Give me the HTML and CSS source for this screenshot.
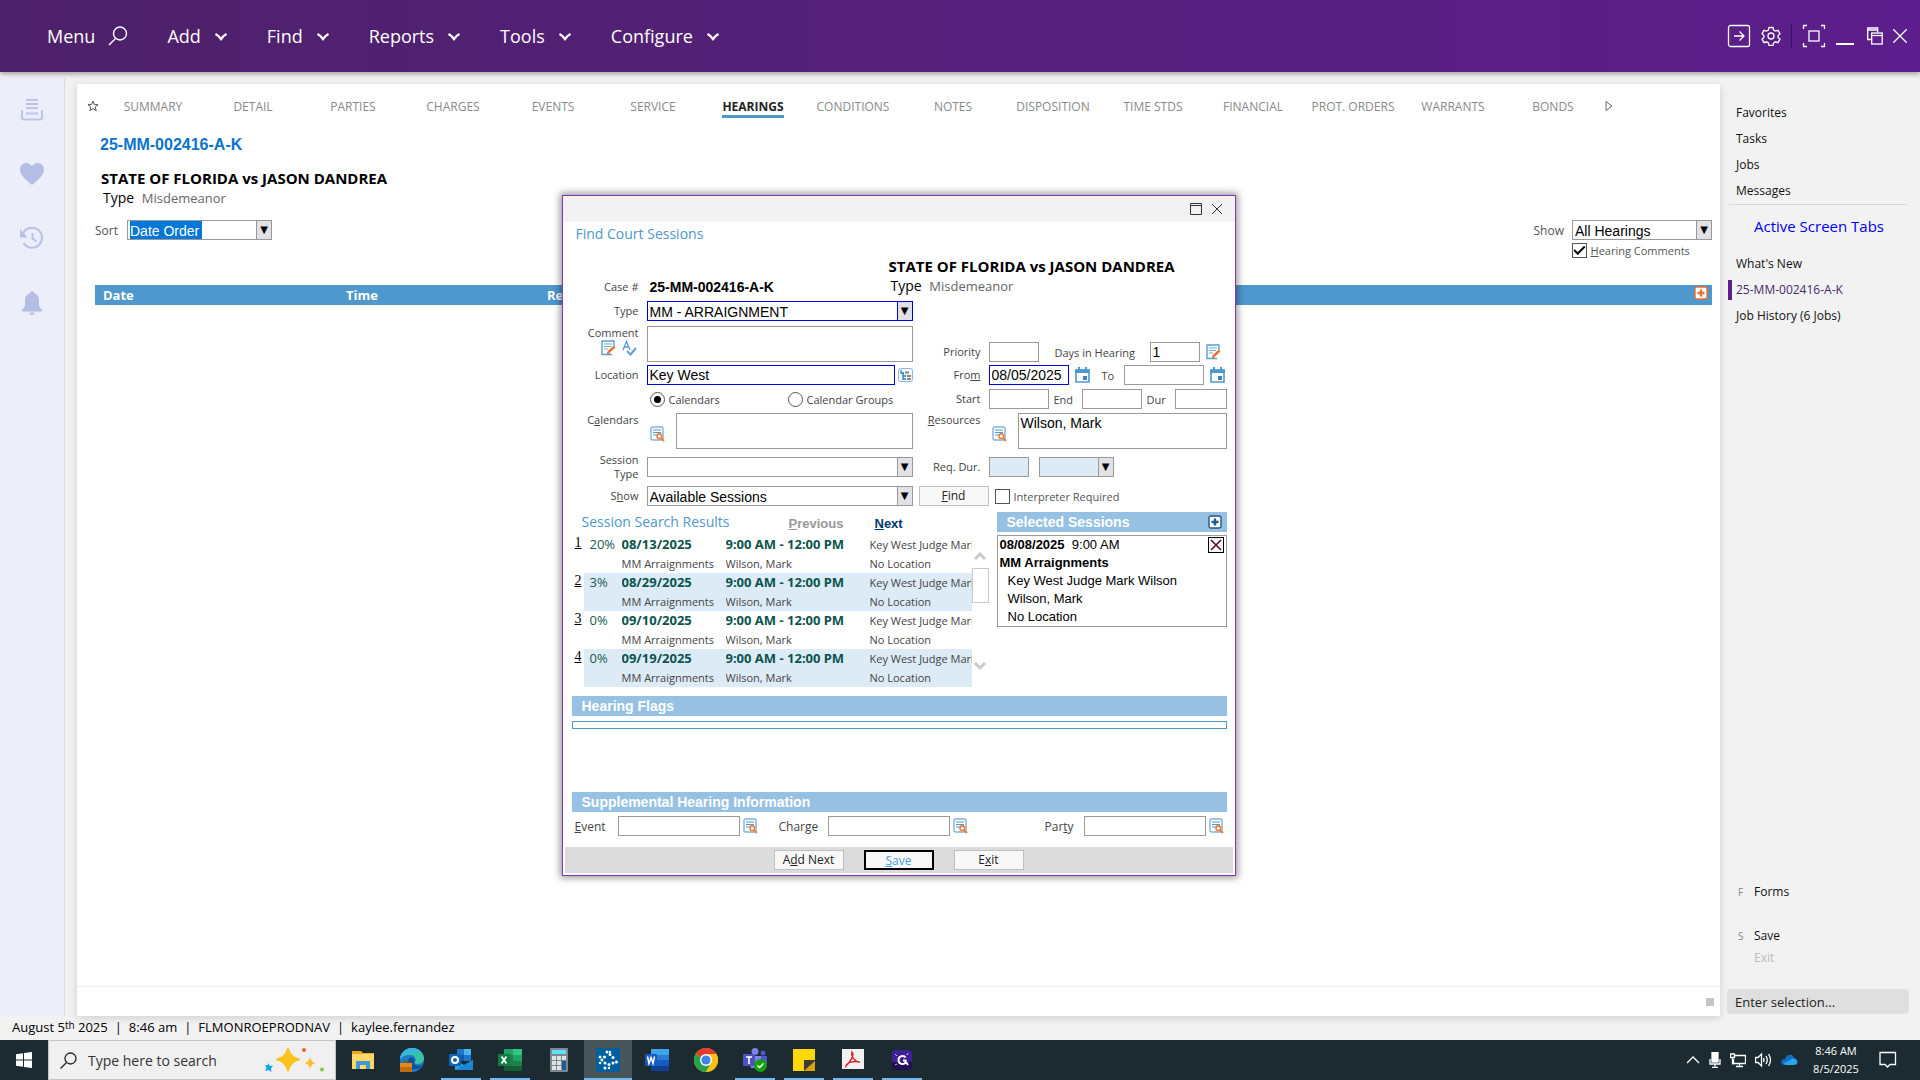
FILE: index.html
```html
<!DOCTYPE html>
<html lang="en">
<head>
  <meta charset="UTF-8">
  <title>25-MM-002416-A-K - Hearings</title>
  <meta name="viewport" content="width=device-width, initial-scale=1.0">
  <link rel="stylesheet" href="styles.css">
</head>
<body>
  <!-- shared icons -->
  <svg class="sprite" aria-hidden="true">
    <symbol id="chevron" viewBox="0 0 14 14"><path d="M1.500 5q3 1.500 5.500 5 2.500-3.500 5.500-5" fill="none" stroke="#fff" stroke-width="2.4"/></symbol>
    <symbol id="lookup" viewBox="0 0 15 16">
      <rect x="1" y="1" width="12" height="13" rx="1.5" fill="#fff" stroke="#7fb2dc" stroke-width="1.4"/>
      <path d="M3 4h8M3 6.5h8M3 9h5" stroke="#4e98ce" stroke-width="1.2"/>
      <circle cx="9.3" cy="10.2" r="2.3" fill="#fff" stroke="#ee7f3e" stroke-width="1.6"/>
      <path d="M11 12l3 3" stroke="#ee7f3e" stroke-width="2"/>
    </symbol>
    <symbol id="note" viewBox="0 0 15 16">
      <path d="M13 6V1H1v13.500h10" fill="#fff" stroke="#5a9fd2" stroke-width="1.4"/>
      <path d="M3 4h8M3 6.500h7M3 9h4" stroke="#6aa9d8" stroke-width="1.2"/>
      <path d="M7 14l.6-2 6-5.500" fill="none" stroke="#e8722e" stroke-width="2.400"/>
    </symbol>
    <symbol id="calendar" viewBox="0 0 15 16">
      <path d="M1 3h13v12H1z" fill="#fff" stroke="#4e98ce" stroke-width="1.600"/>
      <path d="M0 2.500h15V6H0zM3 0h2v3H3zM10 0h2v3h-2z" fill="#4e98ce"/>
      <rect x="8" y="9" width="4" height="4" fill="#3a86c0"/>
    </symbol>
    <symbol id="plus" viewBox="0 0 14 14">
      <rect x="1" y="1" width="12" height="12" rx="2" fill="#fff" stroke="currentColor" stroke-width="1.4"/>
      <path d="M7 3.500v7M3.500 7h7" stroke="currentColor" stroke-width="2.4"/>
    </symbol>
  </svg>

  <div class="app">
    <header class="topbar">
      <nav class="menu">
        <button class="menu-item menu-search">Menu
          <svg width="20" height="20" viewBox="0 0 20 20"><circle cx="12" cy="7.500" r="6.500" fill="none" stroke="#fff" stroke-width="1.400"/><path d="M7.500 12.500L1 19" stroke="#fff" stroke-width="1.400"/></svg>
        </button>
        <button class="menu-item">Add <svg class="chev"><use href="#chevron"/></svg></button>
        <button class="menu-item">Find <svg class="chev"><use href="#chevron"/></svg></button>
        <button class="menu-item">Reports <svg class="chev"><use href="#chevron"/></svg></button>
        <button class="menu-item">Tools <svg class="chev"><use href="#chevron"/></svg></button>
        <button class="menu-item">Configure <svg class="chev"><use href="#chevron"/></svg></button>
      </nav>
      <div class="window-tools">
        <button aria-label="Log out"><svg width="24" height="24" viewBox="0 0 24 24"><rect x="1.500" y="1.500" width="21" height="21" rx="2" /><path d="M7 12h10M12.500 7.500L17 12l-4.500 4.500"/></svg></button>
        <button aria-label="Settings"><svg width="20" height="20" viewBox="0 0 20 20"><circle cx="10" cy="10" r="3"/><path d="M8 1.500h4l.6 2.500 1.900 1.100 2.500-.8 2 3.400-1.900 1.800v1.900l1.900 1.800-2 3.400-2.500-.8-1.900 1.100-.6 2.500H8l-.6-2.500-1.900-1.100-2.500.8-2-3.400 1.900-1.800V9.500L1 7.700l2-3.400 2.500.8L7.400 4z"/></svg></button>
        <span class="tool-sep"></span>
        <button aria-label="Focus"><svg width="24" height="24" viewBox="0 0 24 24"><rect x="7" y="7" width="10" height="10"/><path d="M1.500 5V1.500H5M19 1.500h3.500V5M22.500 19v3.500H19M5 22.500H1.500V19"/></svg></button>
        <button aria-label="Minimize"><svg width="18" height="24" viewBox="0 0 18 24"><path d="M0 20h18" stroke-width="2"/></svg></button>
        <button class="restore" aria-label="Restore"><svg width="16" height="18" viewBox="0 0 16 18"><path d="M4.500 12.500H.7V1h10v4.500M.7 3h10"/><rect x="4.700" y="6" width="10.500" height="11"/><path d="M4.700 8.500h10.500"/></svg></button>
        <button aria-label="Close"><svg width="14" height="14" viewBox="0 0 14 14"><path d="M0 0l14 14M14 0L0 14"/></svg></button>
      </div>
    </header>

    <div class="workspace">
      <aside class="rail">
        <button aria-label="Documents"><svg width="24" height="22" viewBox="0 0 24 22"><path d="M6 1h12M6 5h12M6 9h12M6 14.500h12" stroke="#bdc5e6" stroke-width="2"/><path d="M2 11v7.500q0 2 2 2h16q2 0 2-2V11" fill="none" stroke="#bdc5e6" stroke-width="2"/></svg></button>
        <button aria-label="Favorites"><svg width="24" height="22" viewBox="0 0 24 22"><path d="M12 22C5 16 0 12 0 6.500 0 3 2.700 0 6.200 0 8.700 0 11 1.500 12 3.500 13 1.500 15.300 0 17.800 0 21.300 0 24 3 24 6.500 24 12 19 16 12 22z" fill="#b4bde4"/></svg></button>
        <button aria-label="History"><svg width="24" height="22" viewBox="0 0 24 22"><path d="M3 6.500A10 10 0 1 1 3.500 16" fill="none" stroke="#b9c1e5" stroke-width="2"/><path d="M0 2v8.500h7.500z" fill="#b9c1e5"/><path d="M12.500 6v5.500l4 3" fill="none" stroke="#b9c1e5" stroke-width="2"/></svg></button>
        <button aria-label="Alerts"><svg width="20" height="24" viewBox="0 0 20 24"><path d="M10 0c1.200 0 2 .9 2 2.200 3.400.9 5 3.600 5 7.300v6L20 19v1.500H0V19l3-3.500v-6c0-3.700 1.600-6.400 5-7.300C8 .9 8.800 0 10 0zM7.500 21.500h5C12.500 23 11.500 24 10 24s-2.500-1-2.500-2.500z" fill="#b4bde4"/></svg></button>
      </aside>

      <main class="panel">
        <nav class="tabs">
          <svg class="star" width="12" height="12" viewBox="0 0 12 12"><path d="M6 1l1.400 3.500 3.600.2-2.800 2.300 1 3.700L6 8.600l-3.200 2.100 1-3.700L1 4.700l3.600-.2z" fill="none" stroke="#555"/></svg>
          <a href="#">SUMMARY</a>
          <a href="#">DETAIL</a>
          <a href="#">PARTIES</a>
          <a href="#">CHARGES</a>
          <a href="#">EVENTS</a>
          <a href="#">SERVICE</a>
          <a href="#" class="active"><span>HEARINGS</span></a>
          <a href="#">CONDITIONS</a>
          <a href="#">NOTES</a>
          <a href="#">DISPOSITION</a>
          <a href="#">TIME STDS</a>
          <a href="#">FINANCIAL</a>
          <a href="#">PROT. ORDERS</a>
          <a href="#">WARRANTS</a>
          <a href="#">BONDS</a>
          <svg width="12" height="12" viewBox="0 0 12 12"><path d="M3 1.500l6 4.500-6 4.500z" fill="none" stroke="#666"/></svg>
        </nav>

        <h1 class="case-number">25-MM-002416-A-K</h1>
        <div class="case-style">
          <strong>STATE OF FLORIDA vs JASON DANDREA</strong>
          <p>Type <span>Misdemeanor</span></p>
        </div>

        <div class="filters">
          <div class="filter">
            <label for="sort">Sort</label>
            <div class="combo sort"><select id="sort"><option>Date Order</option></select></div>
          </div>
          <div class="filter-right">
            <div class="filter">
              <label for="showHearings">Show</label>
              <div class="combo show-hearings"><select id="showHearings"><option>All Hearings</option></select></div>
            </div>
            <label class="check"><input type="checkbox" checked> <span><u>H</u>earing Comments</span></label>
          </div>
        </div>

        <table class="hearings">
          <thead>
            <tr><th class="col-date">Date</th><th class="col-time">Time</th><th>Result</th><th class="col-add"><button aria-label="Add hearing"><svg width="14" height="14"><use href="#plus"/></svg></button></th></tr>
          </thead>
        </table>

        <div class="panel-foot"><span class="grip"></span></div>

        <section class="dialog" role="dialog" aria-labelledby="dialogTitle">
          <div class="dialog-bar">
            <button aria-label="Maximize"><svg width="12" height="12" viewBox="0 0 12 12"><path d="M.5.5h11v11H.5zM.5 2.500h11" fill="none" stroke="#333"/></svg></button>
            <button aria-label="Close"><svg width="12" height="12" viewBox="0 0 12 12"><path d="M1 1l10 10M11 1L1 11" stroke="#333"/></svg></button>
          </div>
          <div class="dialog-body">
            <h2 id="dialogTitle">Find Court Sessions</h2>

            <div class="form-cols">
              <div class="form-left">
                <div class="row case-row"><span class="lbl">Case #</span><strong>25-MM-002416-A-K</strong></div>
                <div class="row type-row">
                  <label class="lbl" for="type">Type</label>
                  <div class="combo required grow"><select id="type"><option>MM - ARRAIGNMENT</option></select></div>
                </div>
                <div class="row tall">
                  <div class="lbl">
                    <label for="comment">Comment</label>
                    <div class="lbl-icons">
                      <button class="icon" aria-label="Edit comment"><svg><use href="#note"/></svg></button>
                      <button class="icon" aria-label="Spell check"><svg viewBox="0 0 15 16"><path d="M1 10L4.500 1.500 8 10M2.200 7h4.600" fill="none" stroke="#5a9fd2" stroke-width="1.400"/><path d="M5 11l3.500 3.500L14 8" fill="none" stroke="#5a9fd2" stroke-width="2"/></svg></button>
                    </div>
                  </div>
                  <textarea id="comment" class="grow"></textarea>
                </div>
                <div class="row">
                  <label class="lbl" for="location">Location</label>
                  <input id="location" class="required grow" value="Key West">
                  <button class="icon after" aria-label="Location tree"><svg viewBox="0 0 15 16"><rect x=".5" y="1.500" width="14" height="13" rx="2" fill="#f4f8fc" stroke="#8db4dc"/><path d="M3 3v3h3M5 6v6h3M5 9h3" fill="none" stroke="#1f7fc0" stroke-width="1.300"/><path d="M7 5.500h4M9 9h4M9 12h4" stroke="#888" stroke-width="2"/></svg></button>
                </div>
                <div class="row radios">
                  <label><input type="radio" name="scope" checked> Calendars</label>
                  <label><input type="radio" name="scope"> Calendar Groups</label>
                </div>
                <div class="row tall">
                  <label class="lbl" for="calendars">C<u>a</u>lendars</label>
                  <button class="icon before" aria-label="Look up calendars"><svg><use href="#lookup"/></svg></button>
                  <textarea id="calendars" class="grow"></textarea>
                </div>
                <div class="row session-type">
                  <label class="lbl" for="sessionType">Session<br>Type</label>
                  <div class="combo grow"><select id="sessionType"><option></option></select></div>
                </div>
                <div class="row">
                  <label class="lbl" for="show">S<u>h</u>ow</label>
                  <div class="combo grow"><select id="show"><option>Available Sessions</option></select></div>
                </div>
              </div>

              <div class="form-right">
                <div class="case-style">
                  <strong>STATE OF FLORIDA vs JASON DANDREA</strong>
                  <p>Type <span>Misdemeanor</span></p>
                </div>
                <div class="row priority-row">
                  <label class="lbl" for="priority">Priority</label>
                  <input id="priority" class="w50">
                  <label class="mid days" for="days">Days in Hearing</label>
                  <input id="days" class="w50" value="1">
                  <button class="icon after" aria-label="Edit days"><svg><use href="#note"/></svg></button>
                </div>
                <div class="row">
                  <label class="lbl" for="from">Fro<u>m</u></label>
                  <input id="from" class="w80 required" value="08/05/2025">
                  <button class="icon after" aria-label="Pick from date"><svg><use href="#calendar"/></svg></button>
                  <label class="mid to" for="to">To</label>
                  <input id="to" class="w80">
                  <button class="icon after" aria-label="Pick to date"><svg><use href="#calendar"/></svg></button>
                </div>
                <div class="row start-row">
                  <label class="lbl" for="start">Start</label>
                  <input id="start" class="w60">
                  <label class="mid" for="end">End</label>
                  <input id="end" class="w60">
                  <label class="mid" for="dur">Dur</label>
                  <input id="dur" class="grow">
                </div>
                <div class="row tall">
                  <label class="lbl" for="resources"><u>R</u>esources</label>
                  <button class="icon before" aria-label="Look up resources"><svg><use href="#lookup"/></svg></button>
                  <textarea id="resources" class="grow">Wilson, Mark</textarea>
                </div>
                <div class="row session-type">
                  <label class="lbl" for="reqDur">Req. Dur.</label>
                  <input id="reqDur" class="w40 tinted">
                  <div class="combo tinted unit"><select aria-label="Duration unit"><option></option></select></div>
                </div>
                <div class="row find-row">
                  <button class="btn"><u>F</u>ind</button>
                  <label class="check"><input type="checkbox"> <span>Interpreter Required</span></label>
                </div>
              </div>
            </div>

            <div class="sessions">
              <div class="results">
                <div class="results-head">
                  <h3>Session Search Results</h3>
                  <a href="#" class="prev"><u>P</u>revious</a>
                  <a href="#" class="next"><u>N</u>ext</a>
                </div>
                <div class="results-list">
                  <table>
                    <tr><td class="num"><a href="#">1</a></td><td class="pct">20%</td><td class="date"><b>08/13/2025</b>MM Arraignments</td><td class="time"><b>9:00 AM - 12:00 PM</b>Wilson, Mark</td><td class="loc">Key West Judge Mark Wilson<br>No Location</td></tr>
                    <tr class="alt"><td class="num"><a href="#">2</a></td><td class="pct">3%</td><td class="date"><b>08/29/2025</b>MM Arraignments</td><td class="time"><b>9:00 AM - 12:00 PM</b>Wilson, Mark</td><td class="loc">Key West Judge Mark Wilson<br>No Location</td></tr>
                    <tr><td class="num"><a href="#">3</a></td><td class="pct">0%</td><td class="date"><b>09/10/2025</b>MM Arraignments</td><td class="time"><b>9:00 AM - 12:00 PM</b>Wilson, Mark</td><td class="loc">Key West Judge Mark Wilson<br>No Location</td></tr>
                    <tr class="alt"><td class="num"><a href="#">4</a></td><td class="pct">0%</td><td class="date"><b>09/19/2025</b>MM Arraignments</td><td class="time"><b>9:00 AM - 12:00 PM</b>Wilson, Mark</td><td class="loc">Key West Judge Mark Wilson<br>No Location</td></tr>
                  </table>
                  <div class="scroller">
                    <svg width="12" height="9" viewBox="0 0 12 9"><path d="M1 8l5-5 5 5" fill="none" stroke="#c9c9c9" stroke-width="3"/></svg>
                    <span class="thumb"></span>
                    <svg class="down" width="12" height="9" viewBox="0 0 12 9"><path d="M1 1l5 5 5-5" fill="none" stroke="#c9c9c9" stroke-width="3"/></svg>
                  </div>
                </div>
              </div>
              <div class="selected">
                <h3 class="bar">Selected Sessions <button aria-label="Add session"><svg width="14" height="14"><use href="#plus"/></svg></button></h3>
                <div class="selected-box">
                  <button class="remove" aria-label="Remove session"><svg width="12" height="12" viewBox="0 0 12 12"><path d="M1 1l10 10M11 1L1 11" stroke="#5c0a35" stroke-width="1.600"/></svg></button>
                  <p><b>08/08/2025</b>&nbsp; 9:00 AM</p>
                  <p><b>MM Arraignments</b></p>
                  <p class="sub">Key West Judge Mark Wilson</p>
                  <p class="sub">Wilson, Mark</p>
                  <p class="sub">No Location</p>
                </div>
              </div>
            </div>

            <h3 class="bar">Hearing Flags</h3>
            <div class="flags"></div>
            <h3 class="bar supplemental">Supplemental Hearing Information</h3>
            <div class="lookups">
              <div class="lookup"><label for="event"><u>E</u>vent</label><input id="event"><button class="icon" aria-label="Look up event"><svg><use href="#lookup"/></svg></button></div>
              <div class="lookup"><label for="charge">Char<u>g</u>e</label><input id="charge"><button class="icon" aria-label="Look up charge"><svg><use href="#lookup"/></svg></button></div>
              <div class="lookup last"><label for="party">Par<u>t</u>y</label><input id="party"><button class="icon" aria-label="Look up party"><svg><use href="#lookup"/></svg></button></div>
            </div>
          </div>
          <div class="dialog-actions">
            <button class="btn">A<u>d</u>d Next</button>
            <button class="btn primary"><u>S</u>ave</button>
            <button class="btn">E<u>x</u>it</button>
          </div>
        </section>
      </main>

      <aside class="side">
        <nav>
          <a href="#">Favorites</a>
          <a href="#">Tasks</a>
          <a href="#">Jobs</a>
          <a href="#">Messages</a>
        </nav>
        <h2>Active Screen Tabs</h2>
        <nav>
          <a href="#">What's New</a>
          <a href="#" class="current">25-MM-002416-A-K</a>
          <a href="#">Job History (6 Jobs)</a>
        </nav>
        <div class="commands">
          <a href="#" class="forms"><kbd>F</kbd>Forms</a>
          <a href="#"><kbd>S</kbd>Save</a>
          <a href="#" class="off"><kbd></kbd>Exit</a>
        </div>
        <input class="selection" aria-label="Enter selection" placeholder="Enter selection...">
      </aside>
    </div>

    <div class="status">
      <span>August 5<sup>th</sup> 2025</span><i>|</i><span>8:46 am</span><i>|</i><span>FLMONROEPRODNAV</span><i>|</i><span>kaylee.fernandez</span>
    </div>
  </div>

  <footer class="taskbar">
    <button class="start" aria-label="Start"><svg width="16" height="16" viewBox="0 0 16 16"><path d="M0 2.200l7-1V7.500H0zM8 1l8-1v7.500H8zM0 8.500h7v6.200l-7-1zM8 8.500h8V16l-8-1z" fill="#fff"/></svg></button>
    <div class="search">
      <svg width="17" height="17" viewBox="0 0 17 17"><circle cx="10.500" cy="6.500" r="5.500" fill="none" stroke="#222" stroke-width="1.300"/><path d="M6.500 10.500L.5 16.500" stroke="#222" stroke-width="1.300"/></svg>
      <input aria-label="Search" placeholder="Type here to search">
      <svg width="62" height="26" viewBox="0 0 62 26"><path d="M24 1q2 9 11.500 11.500Q26 15 24 24q-2-9-11.500-11.500Q22 10 24 1z" fill="#fbc31f" stroke="#fbc31f" stroke-width="1.500" stroke-linejoin="round"/><path d="M46 10q1 5 5.500 6Q47 17 46 22q-1-5-5.500-6Q45 15 46 10z" fill="#fbbd2c"/><path d="M4 16l2 3 3-.5-2 3 .5 3.500-3-2-3.500 1 1.500-3.500-1.500-2.500h3z" fill="#12a5f0"/><circle cx="40" cy="3" r="2" fill="#f0642c"/><circle cx="58" cy="22.500" r="2" fill="#8bc34a"/></svg>
    </div>
    <div class="apps">
      <button aria-label="File Explorer"><svg viewBox="0 0 24 24"><path d="M1 3h9l2 2h11v15H1z" fill="#e9a820"/><path d="M1 6h22v15H1z" fill="#ffd867"/><path d="M5 21v-8h14v8h-4v-4H9v4z" fill="#3f97dd"/></svg></button>
      <button aria-label="Edge"><svg viewBox="0 0 24 24"><circle cx="12" cy="12" r="12" fill="#1c7cc9"/><path d="M0 11C1 4 6 0 12 0c7 0 12 5 12 10 0 4-3 6-7 6-2 0-3-1-2-2 2-3 0-7-5-7-5 0-9 2-10 4z" fill="#36c4a4"/><path d="M3 4C8-2 17-1 21 4l-6 1C11 4 6 6 0 11c0-3 1-5 3-7z" fill="#38b4e4"/><path d="M10 20c-4-4-3-9 1-11 4 1 4 4 3 6 0 3 6 4 9 1-2 5-8 7-13 4z" fill="#124f99"/><path d="M0 15h12v9H0z" fill="#c06a12"/><path d="M0 15h12v4H0z" fill="#e08a1c"/><path d="M4 15v-2h4v2" fill="none" stroke="#8a4a08"/></svg></button>
      <button class="open" aria-label="Outlook"><svg viewBox="0 0 24 24"><path d="M8 1h14v12H8z" fill="#1a76c8"/><path d="M15 1h7v6h-7z" fill="#50b5ec"/><path d="M8 7h7v6H8z" fill="#0f5ba8"/><path d="M6 12l9 5 9-5v10H6z" fill="#28a1e5"/><path d="M6 22l18-10v10z" fill="#1c87d6"/><rect y="6" width="12" height="12" rx="1" fill="#0f64b8"/><circle cx="6" cy="12" r="3" fill="none" stroke="#fff" stroke-width="2"/></svg></button>
      <button class="open" aria-label="Excel"><svg viewBox="0 0 24 24"><path d="M6 1h18v22H6z" fill="#1b8049"/><path d="M6 1h9v6H6z" fill="#21a366"/><path d="M15 1h9v6h-9z" fill="#33c481"/><path d="M15 7h9v6h-9z" fill="#21a366"/><path d="M6 18h18v5H6z" fill="#135c34"/><rect y="6" width="12" height="12" rx="1" fill="#107c41"/><path d="M3.500 8.500l5 7M8.500 8.500l-5 7" stroke="#fff" stroke-width="1.800"/></svg></button>
      <button aria-label="Calculator"><svg viewBox="0 0 24 24"><rect x="3" width="18" height="24" rx="1" fill="#7c8790"/><path d="M5 2h14v4H5z" fill="#5fe0fb"/><path d="M5 8h4v4H5zM10 8h4v4h-4zM15 8h4v4h-4zM5 13h4v4H5zM10 13h4v4h-4zM5 18h4v4H5zM10 18h4v4h-4z" fill="#dfe3e6"/><path d="M15 13h4v9h-4z" fill="#1b5c9c"/></svg></button>
      <button class="open current" aria-label="Case manager"><svg viewBox="0 0 24 24"><path d="M0 0h24v24H0z" fill="#00609e"/><g fill="#fff"><circle cx="11" cy="4" r="1.500"/><circle cx="14" cy="6.500" r="1.500"/><circle cx="17" cy="9.500" r="1.500"/><circle cx="20.500" cy="14" r="1.500"/><circle cx="17" cy="15" r="1.500"/><circle cx="13" cy="16.500" r="1.500"/><circle cx="9" cy="20" r="1.500"/><circle cx="4" cy="9" r="1.500"/><circle cx="6" cy="12" r="1.500"/><circle cx="9" cy="15" r="1.500"/><circle cx="8.500" cy="9" r="1.500"/><circle cx="4" cy="15" r="1.200"/><circle cx="14" cy="4" r="1.200"/><circle cx="13" cy="20" r="1.200"/></g></svg></button>
      <button aria-label="Word"><svg viewBox="0 0 24 24"><path d="M6 1h18v22H6z" fill="#185abd"/><path d="M6 1h18v6H6z" fill="#41a5ee"/><path d="M6 7h18v5H6z" fill="#2b7cd3"/><path d="M6 18h18v5H6z" fill="#103f91"/><rect y="6" width="12" height="12" rx="1" fill="#185abd"/><path d="M2.500 8.500l1.500 7 2-6 2 6 1.500-7" fill="none" stroke="#fff" stroke-width="1.500"/></svg></button>
      <button aria-label="Chrome"><svg viewBox="0 0 24 24"><circle cx="12" cy="12" r="12" fill="#fbc116"/><path d="M12 12L1.600 6A12 12 0 0 1 22.400 6z" fill="#e33b2e"/><path d="M12 12L1.600 6A12 12 0 0 0 12 24l5-9z" fill="#2aa04c"/><path d="M12 6h10.400A12 12 0 0 1 12 24l5.200-9z" fill="#fbc116"/><circle cx="12" cy="12" r="6" fill="#fff"/><circle cx="12" cy="12" r="4.600" fill="#3f80ee"/></svg></button>
      <button class="open" aria-label="Teams"><svg viewBox="0 0 24 24"><circle cx="12" cy="3.500" r="3.500" fill="#7b83eb"/><circle cx="20" cy="5" r="2.500" fill="#5059c9"/><path d="M15 8h9v8h-9z" fill="#5059c9"/><path d="M6 8h12v12H8z" fill="#7b83eb"/><rect y="6" width="12" height="12" rx="1" fill="#4b53bc"/><path d="M3 9h6M6 9v7" stroke="#fff" stroke-width="1.600"/><circle cx="17.500" cy="17.500" r="6.500" fill="#13a10e"/><path d="M14.500 17.500l2 2 4-4" fill="none" stroke="#fff" stroke-width="1.500"/></svg></button>
      <button class="open" aria-label="Sticky Notes"><svg viewBox="0 0 24 24"><path d="M1 1h22v12l-11 10H1z" fill="#ffd800"/><path d="M12 12h11v1L12 23z" fill="#3c3c3c"/><path d="M23 13v10H12z" fill="#dca400"/></svg></button>
      <button class="open" aria-label="Acrobat"><svg viewBox="0 0 24 24"><path d="M1 1h22v20H1z" fill="#f1f1f1"/><path d="M11 4c3 3-2 10-6 14 1-4 8-5 14-4-5 0-9-5-8-10z" fill="none" stroke="#d8262c" stroke-width="1.500"/></svg></button>
      <button class="open" aria-label="Grid"><svg viewBox="0 0 24 24"><rect x="2" y="2" width="20" height="20" rx="4" fill="#3f1f96"/><path d="M2 14h20v4a4 4 0 0 1-4 4H6a4 4 0 0 1-4-4z" fill="#21104f"/><path d="M15.500 9.500C14 7 8.500 7.500 8.500 12s5.500 5 7 2.500V12.500H13M16 14l2 3" fill="none" stroke="#fff" stroke-width="2"/><path d="M5 6l2 2M18 5l-1 2M5 17l2-1" stroke="#d9c8ff"/></svg></button>
    </div>
    <div class="tray">
      <svg width="14" height="14" viewBox="0 0 14 14"><path d="M1 10l6-6 6 6"/></svg>
      <svg width="12" height="16" viewBox="0 0 12 16"><rect x="3" y="0" width="6" height="10" fill="#fff"/><path d="M1 7v5h10V7M6 12v4M3 15.500h6"/></svg>
      <svg width="16" height="16" viewBox="0 0 16 16"><path d="M5 3.500h10.500v8H3.500V7M6 14.500h7M9.500 12v2"/><path d="M.5 2h4v3.500h-4zM2.500 5.500v7"/></svg>
      <svg width="17" height="16" viewBox="0 0 17 16"><path d="M.5 5.500h2.500L6.500 2v12L3 10.500H.5zM8.500 6q1 2 0 4M11 4q2.500 4 0 8M13.500 2q4 6 0 12"/></svg>
      <svg width="17" height="12" viewBox="0 0 17 12"><path d="M4 11C-1 11-1 5 4 5 5 0 12-1 13 4c5 1 5 7 0 7z" fill="#0f6fc6" stroke="none"/><path d="M3 9l8-4c3-1 7 3 4 5l-2 1H4z" fill="#28a8ea" stroke="none"/></svg>
      <div class="clock">8:46 AM<br>8/5/2025</div>
      <svg width="18" height="18" viewBox="0 0 18 18"><path d="M1 1.500h15.500v12H11L8.500 16 6 13.500H1z"/></svg>
    </div>
  </footer>
</body>
</html>
```

FILE: styles.css
```css
* { box-sizing: border-box; }
body { margin: 0; min-height: 100vh; display: flex; flex-direction: column; background: #f2f2f2; font-family: "Open Sans", "Noto Sans", sans-serif; font-size: 12px; color: #222; }
button { font: inherit; color: inherit; background: none; border: 0; padding: 0; }
button svg { display: block; }
h1, h2, h3, p { margin: 0; }
a { color: inherit; text-decoration: none; }
input, select, textarea { font: 14px "Liberation Sans", Arial, sans-serif; color: #000; border: 1px solid #999; border-radius: 0; background: #fff; margin: 0; }
.sprite { position: absolute; width: 0; height: 0; }
.app { flex: 1; display: flex; flex-direction: column; }

/* top bar */
.topbar { height: 72px; display: flex; justify-content: space-between; align-items: center; background: linear-gradient(90deg, #4d2169, #5c1e8c); box-shadow: 0 2px 5px rgba(0,0,0,0.35); padding: 0 13px 0 47px; color: #fff; position: relative; }
.menu { display: flex; gap: 39px; font-size: 18px; }
.menu-item { display: flex; align-items: center; gap: 13px; }
.chev { width: 14px; height: 14px; }
.window-tools { display: flex; align-items: center; gap: 10px; }
.window-tools svg { fill: none; stroke: #fff; stroke-width: 1.3; }
.restore { margin-left: 3px; }
.tool-sep { width: 1px; height: 24px; background: #351055; }

/* layout */
.workspace { flex: 1; display: flex; padding-top: 6px; }
.rail { width: 65px; background: #eceffa; border-right: 1px solid #dcdcdc; display: flex; flex-direction: column; align-items: center; gap: 42px; padding-top: 21px; }
.panel { flex: 1; margin: 6px 0 0 12px; background: #fff; box-shadow: 0 2px 8px rgba(0,0,0,0.15); position: relative; display: flex; flex-direction: column; }
.side { width: 200px; display: flex; flex-direction: column; padding: 22px 11px 2px 7px; }

.tabs { display: flex; align-items: center; height: 44px; color: #8a8a8a; padding-left: 10px; }
.tabs a { width: 100px; text-align: center; }
.tabs .star { margin-right: 4px; }
.tabs .active { color: #222; font-weight: bold; }
.tabs .active span { border-bottom: 3px solid #4e98ce; }

.case-number { font: bold 16px "Liberation Sans", Arial, sans-serif; color: #0b74cb; padding: 8px 23px 0; }
.panel > .case-style { padding: 15px 24px 0; }
.case-style strong { display: block; font-size: 15px; line-height: 19px; color: #000; }
.case-style p { font-size: 14px; line-height: 19px; padding-left: 2px; color: #000; }
.case-style p span { font-size: 13px; color: #666; margin-left: 4px; }

.filters { display: flex; justify-content: space-between; padding: 12px 8px 0 18px; color: #555; }
.filter { display: flex; align-items: center; gap: 8px; height: 20px; }
.filter-right { display: flex; flex-direction: column; gap: 3px; }
.filter-right .check { margin-left: 38px; }
.combo { display: flex; position: relative; height: 20px; border: 1px solid #999; background: #fff; }
.combo select { appearance: none; width: 100%; height: 18px; border: 0; padding: 1px 16px 0 2px; background: none; }
.combo::after { content: "\25BC"; position: absolute; top: 0; right: 0; width: 14px; height: 18px; border-left: 1px solid #999; background: #e1e1e6; color: #000; font: 10px/18px "DejaVu Sans", sans-serif; text-align: center; pointer-events: none; }
.sort { width: 145px; padding-left: 2px; margin-left: 1px; }
.sort select { width: 72px; padding: 1px 0 0; background: #0078d7; color: #fff; }
.show-hearings { width: 140px; }
.check { display: flex; align-items: center; gap: 4px; color: #555; font-size: 11px; }
.check input { appearance: none; width: 15px; height: 15px; border: 1px solid #555; display: grid; place-items: center; }
.check input:checked::after { content: ""; width: 9px; height: 4px; border: solid #000; border-width: 0 0 2px 2px; transform: rotate(-45deg); margin-bottom: 3px; }

.hearings { margin: 27px 8px 0 18px; border-collapse: collapse; background: #4e98ce; color: #fff; table-layout: fixed; }
.hearings th { height: 20px; padding: 0 0 0 8px; text-align: left; font-size: 13px; line-height: 18px; }
.hearings .col-date { width: 243px; }
.hearings .col-time { width: 201px; }
.hearings .col-add { width: 26px; padding: 0 4px 0 8px; color: #e8722e; }
.panel-foot { margin-top: auto; height: 30px; border-top: 1px solid #ececec; display: flex; align-items: center; justify-content: flex-end; padding-right: 6px; }
.grip { width: 8px; height: 8px; background: #c6c6c6; }

/* find court sessions dialog */
.dialog { position: absolute; top: 111px; left: 50%; margin-left: -337px; width: 674px; background: #fff; border: 1px solid #8a35b0; box-shadow: 0 0 7px 2px rgba(0,0,0,0.4); color: #444; font-size: 11px; }
.dialog-bar { height: 26px; background: #f2f2f2; display: flex; justify-content: flex-end; align-items: center; gap: 9px; padding-right: 12px; }
.dialog-body { padding: 1px 8px 0 9px; }
.dialog h2 { font-size: 14px; font-weight: normal; line-height: 22px; color: #4e98ce; padding-left: 4px; }
.form-cols { display: flex; justify-content: space-between; padding-top: 14px; }
.form-left { width: 341px; }
.form-right { width: 308px; }
.row { display: flex; align-items: center; height: 20px; margin-bottom: 3px; }
.row input { height: 20px; padding: 0 2px; }
.row textarea { height: 36px; resize: none; padding: 1px 2px; overflow: hidden; line-height: 16px; }
.grow { flex: 1; min-width: 0; }
.lbl { width: 67px; margin-right: 8px; text-align: right; line-height: 14px; }
.form-right .lbl { width: 62px; }
.row input.required, .combo.required { border-color: #0000e6; }
.combo.required::after { border-color: #0000e6; }
.case-row { padding-top: 18px; height: 38px; margin-bottom: 4px; }
.case-row strong { font: bold 14px "Liberation Sans", Arial, sans-serif; color: #000; padding-left: 3px; }
.type-row { margin-bottom: 5px; }
.row.tall { height: 36px; align-items: flex-start; }
.lbl-icons { display: flex; justify-content: flex-end; gap: 6px; padding-right: 2px; }
.icon { width: 15px; height: 16px; flex: none; }
.icon svg { width: 15px; height: 16px; }
.after { margin-left: 3px; }
.form-right .after { margin-left: 6px; }
.before { margin: 13px 11px 0 3px; }
.row.radios { padding-left: 78px; margin: 4px 0; gap: 27px; }
.radios label { display: flex; align-items: center; gap: 4px; width: 111px; white-space: nowrap; }
.radios input { appearance: none; width: 15px; height: 15px; border: 1px solid #555; border-radius: 50%; padding: 3px; }
.radios input:checked { background: #000 content-box; }
.row.session-type { margin: 8px 0 9px; }
.mid { width: 33px; padding-left: 5px; white-space: nowrap; }
.mid.days { width: 111px; padding-left: 16px; }
.mid.to { width: 34px; padding-left: 12px; }
.w40 { width: 40px; }
.w50 { width: 50px; }
.w60 { width: 60px; }
.w80 { width: 80px; }
.form-right > .case-style { margin: -2px 0 0 -30px; height: 76px; }
.priority-row { margin-top: 9px; }
.start-row { margin: 4px 0; }
.row .tinted, .combo.tinted { background: #ddebf6; }
.unit { width: 75px; margin-left: 10px; }
.find-row .check { margin-left: 6px; }
.find-row .check input { height: 15px; padding: 0; }
.btn { width: 70px; height: 20px; border: 1px solid #c0c0c0; background: #f8f8f8; color: #222; font-size: 12px; line-height: 18px; }
.bar { display: flex; justify-content: space-between; align-items: center; height: 20px; background: #96c1e3; color: #fff; font: bold 14px "Liberation Sans", Arial, sans-serif; padding: 0 5px 0 10px; }
.bar button { color: #1d5a8c; }

.sessions { display: flex; justify-content: space-between; padding-top: 3px; }
.results { width: 417px; }
.results-head { display: flex; height: 23px; font: bold 13px "Liberation Sans", Arial, sans-serif; }
.results-head h3 { width: 217px; padding-left: 10px; font: 14px/20px "Open Sans", sans-serif; color: #4e98ce; }
.results-head a { line-height: 23px; }
.prev { width: 86px; color: #999; }
.next { color: #003a70; }
.results-list { display: flex; }
.results table { width: 400px; border-collapse: collapse; table-layout: fixed; }
.results td { padding: 0; height: 38px; line-height: 19px; white-space: nowrap; overflow: hidden; vertical-align: top; }
.results .num { width: 12px; padding-left: 3px; background: #fff; font: 14px "Liberation Serif", serif; color: #000; }
.results .num a { text-decoration: underline; }
.results .pct { width: 38px; padding-left: 6px; color: #1a5c50; font-size: 13px; }
.results .date { width: 104px; }
.results .time { width: 144px; }
.results b { display: block; color: #0b544b; font: bold 13px/19px "Noto Sans", sans-serif; }
.alt { background: #ddebf6; }
.scroller { width: 17px; display: flex; flex-direction: column; align-items: center; padding: 16px 0; }
.thumb { width: 17px; height: 35px; border: 1px solid #c9c9c9; margin-top: 8px; }
.scroller .down { margin-top: auto; }

.selected { width: 230px; }
.selected-box { position: relative; margin-top: 3px; height: 92px; border: 1px solid #999; padding: 0 2px; font: 13px/18px "Liberation Sans", Arial, sans-serif; color: #000; }
.selected-box .sub { padding-left: 8px; }
.remove { position: absolute; top: 1px; right: 2px; width: 16px; height: 16px; border: 1px solid #000; display: grid; place-items: center; }
.sessions + .bar { margin-top: 9px; }
.flags { margin-top: 5px; height: 8px; border: 1px solid #4e98ce; }
.supplemental { margin-top: 63px; }
.lookups { display: flex; padding: 4px 3px 11px; font-size: 12px; }
.lookup { display: flex; align-items: center; }
.lookup + .lookup { margin-left: 21px; }
.lookup label { width: 43px; }
.lookup:nth-child(2) label { width: 49px; }
.lookup input { width: 122px; height: 20px; margin-right: 3px; }
.lookups .last { margin-left: auto; }
.lookup.last label { width: 39px; }
.dialog-actions { display: flex; justify-content: center; gap: 20px; height: 26px; margin: 0 2px 2px; padding-top: 3px; background: #dcdcdc; }
.btn.primary { border: 2px solid #000; color: #3fa2ea; }

/* right side */
.side nav { display: flex; flex-direction: column; border-bottom: 1px solid #d8d8d8; margin: 0 2px; }
.side nav a { line-height: 26px; padding-left: 7px; color: #111; }
.side h2 { font-size: 15px; font-weight: normal; color: #0000f0; line-height: 22px; padding: 10px 0 14px 27px; }
.side h2 + nav { border: 0; }
.side nav .current { color: #46296b; line-height: 20px; margin: 3px 0 3px -1px; padding-left: 4px; border-left: 4px solid #5c1e8c; }
.commands { margin-top: auto; display: flex; flex-direction: column; margin-bottom: 20px; color: #111; }
.commands a { line-height: 22px; }
.commands .forms { margin-bottom: 22px; }
.commands kbd { display: inline-block; width: 16px; margin-left: 11px; font: 10px "Open Sans", sans-serif; color: #888; }
.commands .off { color: #bbb; }
.selection { height: 25px; border: 0; border-radius: 4px; background: #dfdfdf; padding: 0 8px; font: 13px "Open Sans", sans-serif; }
.selection::placeholder { color: #222; }
.status { height: 24px; display: flex; gap: 7px; align-items: center; padding: 0 0 2px 12px; font-size: 13px; color: #000; }
.status i { font-style: normal; }
.status sup { font-size: 10px; line-height: 0; vertical-align: 3px; }

/* taskbar */
.taskbar { height: 40px; display: flex; background: #1b2b31; color: #fff; }
.start { width: 48px; display: grid; place-items: center; }
.search { width: 288px; display: flex; align-items: center; background: #f0f0f0; border: 1px solid #c4c4c4; padding: 0 9px 0 11px; }
.search input { flex: 1; min-width: 0; border: 0; background: none; padding: 0 0 0 11px; font: 14px "Open Sans", sans-serif; }
.search input::placeholder { color: #333; }
.apps { display: flex; gap: 1px; padding-left: 3px; }
.apps button { width: 48px; display: grid; place-items: center; }
.apps svg { width: 24px; height: 24px; }
.apps .open { background: linear-gradient(#76b9ed, #76b9ed) bottom / 40px 2px no-repeat; }
.apps .current { background-color: #485559; background-size: 48px 2px; }
.tray { margin-left: auto; display: flex; align-items: center; gap: 9px; padding-right: 23px; }
.tray svg { fill: none; stroke: #fff; stroke-width: 1.3; }
.clock { width: 58px; text-align: center; line-height: 18px; font-size: 11px; margin-right: 5px; }
```
